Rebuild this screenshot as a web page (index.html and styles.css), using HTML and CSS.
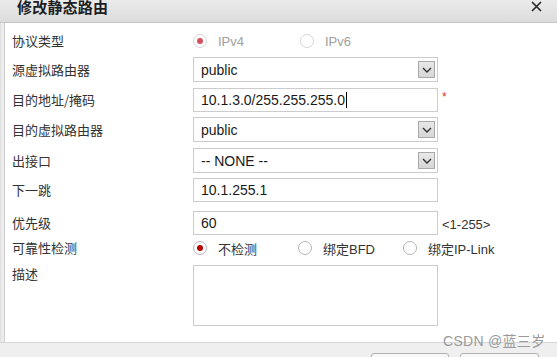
FILE: index.html
```html
<!DOCTYPE html>
<html lang="zh">
<head>
<meta charset="utf-8">
<link rel="stylesheet" href="styles.css">
</head>
<body>
<div class="dialog">
  <div class="titlebar">
    <span class="title">修改静态路由</span>
    <svg class="close" width="11" height="11" viewBox="0 0 11 11"><path d="M1.5 1.5 L9.5 9.5 M9.5 1.5 L1.5 9.5" stroke="#2a2a2a" stroke-width="1.7" stroke-linecap="round"/></svg>
  </div>
  <div class="frame">
    <div class="body">
      <div class="row r-proto">
        <div class="label">协议类型</div>
        <div class="field radios">
          <span class="opt w-ipv4"><span class="radio checked disabled"></span><span class="dis">IPv4</span></span>
          <span class="opt"><span class="radio disabled"></span><span class="dis">IPv6</span></span>
        </div>
      </div>
      <div class="row r-sel1">
        <div class="label">源虚拟路由器</div>
        <div class="field"><div class="box select">public<span class="arrow"><svg width="10" height="6" viewBox="0 0 10 6"><path d="M1 1 L5 5 L9 1" fill="none" stroke="#333" stroke-width="1.4"/></svg></span></div></div>
      </div>
      <div class="row r-in2">
        <div class="label">目的地址/掩码</div>
        <div class="field"><div class="box input">10.1.3.0/255.255.255.0<span class="caret"></span></div><span class="req">*</span></div>
      </div>
      <div class="row r-sel3">
        <div class="label">目的虚拟路由器</div>
        <div class="field"><div class="box select">public<span class="arrow"><svg width="10" height="6" viewBox="0 0 10 6"><path d="M1 1 L5 5 L9 1" fill="none" stroke="#333" stroke-width="1.4"/></svg></span></div></div>
      </div>
      <div class="row r-sel4">
        <div class="label">出接口</div>
        <div class="field"><div class="box select">-- NONE --<span class="arrow"><svg width="10" height="6" viewBox="0 0 10 6"><path d="M1 1 L5 5 L9 1" fill="none" stroke="#333" stroke-width="1.4"/></svg></span></div></div>
      </div>
      <div class="row r-in5">
        <div class="label">下一跳</div>
        <div class="field"><div class="box input">10.1.255.1</div></div>
      </div>
      <div class="row r-in6">
        <div class="label">优先级</div>
        <div class="field"><div class="box input">60</div><span class="hint">&lt;1-255&gt;</span></div>
      </div>
      <div class="row r-rel">
        <div class="label">可靠性检测</div>
        <div class="field radios">
          <span class="opt w-a"><span class="radio checked"></span>不检测</span>
          <span class="opt w-b"><span class="radio"></span>绑定BFD</span>
          <span class="opt"><span class="radio"></span>绑定IP-Link</span>
        </div>
      </div>
      <div class="row r-desc">
        <div class="label">描述</div>
        <div class="field"><div class="box area"></div></div>
      </div>
    </div>
  </div>
  <div class="footer">
    <span class="btn b1"></span>
    <span class="btn b2"></span>
  </div>
  <div class="watermark">CSDN @蓝三岁</div>
</div>
</body>
</html>
```
FILE: styles.css
```css
html, body {
  margin: 0;
  padding: 0;
  width: 557px;
  height: 357px;
  overflow: hidden;
  background: #ffffff;
}
.dialog {
  position: relative;
  width: 557px;
  height: 357px;
  overflow: hidden;
  display: flex;
  flex-direction: column;
  font-family: "Noto Sans CJK SC", "Liberation Sans", sans-serif;
  color: #333;
}
.titlebar {
  height: 22px;
  flex: none;
  background: linear-gradient(#ebebeb, #dcdcdc);
  border-bottom: 1px solid #c4c4c4;
  display: flex;
  align-items: flex-start;
  justify-content: space-between;
  padding: 0 15px 0 17px;
}
.title {
  font-size: 15px;
  font-weight: bold;
  line-height: 14px;
  color: #1e1e1e;
  letter-spacing: 0.2px;
}
.close {
  margin-top: 1px;
}
.frame {
  flex: 1;
  background: #ececec;
  padding-left: 1px;
  border-left: 1px solid #e0e0e0;
}
.body {
  height: 100%;
  box-sizing: border-box;
  margin-left: 2px;
  border-left: 1px solid #cfcfcf;
  background: #fff;
  padding: 9px 0 0 7px;
  display: flex;
  flex-direction: column;
}
.row {
  display: flex;
  align-items: center;
}
.label {
  width: 181px;
  flex: none;
  font-size: 13px;
  color: #333;
  line-height: 16px;
}
.field {
  display: flex;
  align-items: center;
}
.box {
  box-sizing: border-box;
  width: 245px;
  border: 1px solid #cccccc;
  background: #fff;
  font-family: "Liberation Sans", Arial, sans-serif;
  font-size: 14px;
  color: #1a1a1a;
  padding-left: 7px;
  display: flex;
  align-items: center;
  position: relative;
}
.select { height: 25px; }
.input { height: 24px; }
.area { height: 61px; }
.arrow {
  position: absolute;
  right: 2px;
  top: 3px;
  width: 17px;
  height: 17px;
  box-sizing: border-box;
  border: 1px solid #a9a9a9;
  background: linear-gradient(#e8e8e8, #d6d6d6);
  display: flex;
  align-items: center;
  justify-content: center;
}
.caret {
  display: inline-block;
  width: 1px;
  height: 16px;
  background: #000;
  margin-left: 1px;
}
.req {
  color: #e0301e;
  font-size: 12px;
  margin-left: 4px;
  margin-top: -6px;
  font-family: "Liberation Sans", sans-serif;
}
.hint {
  font-family: "Liberation Sans", sans-serif;
  font-size: 13px;
  color: #333;
  margin-left: 4px;
  margin-top: 2px;
}
.radios {
  font-size: 13px;
  height: 18px;
}
.opt {
  display: flex;
  align-items: center;
  font-family: "Liberation Sans", "Noto Sans CJK SC", sans-serif;
}
.w-ipv4 { width: 107px; }
.w-a { width: 105px; }
.w-b { width: 105px; }
.radio {
  box-sizing: border-box;
  width: 14px;
  height: 14px;
  border-radius: 50%;
  border: 1px solid #b5b5b5;
  background: #fff;
  margin: 0 11px 0 0;
  display: inline-flex;
  align-items: center;
  justify-content: center;
}
.radio.checked::after {
  content: "";
  width: 6px;
  height: 6px;
  border-radius: 50%;
  background: #b80000;
}
.radio.disabled { border-color: #d6d6d6; }
.radio.checked.disabled::after { background: #d4505a; }
.dis { color: #a0a0a0; }
.r-proto { margin-top: 0; height: 18px; }
.r-sel1 { margin-top: 7px; }
.r-in2 { margin-top: 6px; }
.r-sel3 { margin-top: 5px; }
.r-sel4 { margin-top: 6px; }
.r-in5 { margin-top: 5px; }
.r-in6 { margin-top: 9px; }
.r-rel { margin-top: 4px; }
.r-desc { margin-top: 8px; align-items: flex-start; }
.r-desc .label { margin-top: 1px; }
.footer {
  flex: none;
  height: 14px;
  background: #efefef;
  border-top: 1px solid #d6d6d6;
  position: relative;
}
.btn {
  position: absolute;
  top: 10px;
  height: 20px;
  box-sizing: border-box;
  border: 1px solid #b0b0b0;
  border-radius: 3px;
  background: #f8f8f8;
}
.b1 { left: 371px; width: 78px; }
.b2 { left: 460px; width: 79px; }
.watermark {
  position: absolute;
  left: 443px;
  top: 330px;
  font-family: "Liberation Sans", "Noto Sans CJK SC", sans-serif;
  font-size: 14px;
  color: #9a9a9a;
  letter-spacing: 0.3px;
}
```
